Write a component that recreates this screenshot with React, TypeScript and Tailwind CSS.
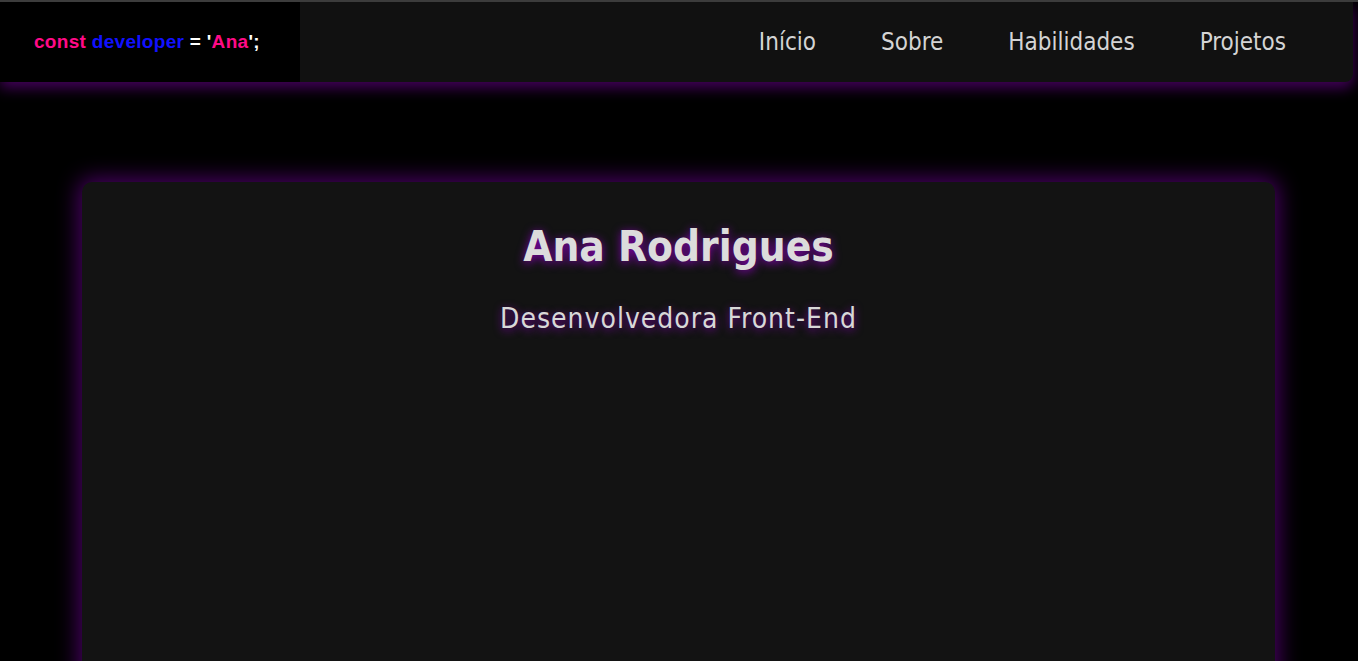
import React from 'react';

const links = ['Início', 'Sobre', 'Habilidades', 'Projetos'];

const App: React.FC = () => {
  return (
    <div className="min-h-screen bg-black border-t-2 border-[#3c3c3c] overflow-hidden">
      {/* Header */}
      <header className="flex items-stretch h-[80px] w-[1353px] bg-[#111111] rounded-br-lg shadow-[0_6px_14px_rgba(90,0,120,0.75)]">
        <div className="w-[300px] bg-black flex items-center pl-[34px]">
          <span className="font-['Liberation_Sans',sans-serif] font-bold text-[19px] tracking-[0.3px] text-white">
            <span className="text-[#ff0a87]">const </span>
            <span className="text-[#1111ff]">developer</span>
            <span> = '</span>
            <span className="text-[#ff0a87]">Ana</span>
            <span>';</span>
          </span>
        </div>
        <nav className="flex-1 flex items-center justify-end pr-[67px] gap-[65px] font-['DejaVu_Sans_Condensed','DejaVu_Sans',sans-serif] text-[24px] text-[#d4d4d4]">
          {links.map((l) => (
            <a key={l} className="cursor-pointer">
              {l}
            </a>
          ))}
        </nav>
      </header>

      {/* Hero */}
      <main className="px-[82px] pt-[100px] pr-[83px]">
        <section className="bg-[#131313] rounded-[10px] h-[600px] shadow-[0_0_22px_3px_rgba(95,0,130,0.8)] flex flex-col items-center pt-[38px]">
          <h1 className="font-['DejaVu_Sans_Condensed','DejaVu_Sans',sans-serif] font-bold text-[42px] leading-[54px] text-[#dcdcdc] [text-shadow:0_2px_10px_rgba(140,0,190,0.9)]">
            Ana Rodrigues
          </h1>
          <p className="mt-[24px] font-['DejaVu_Sans_Condensed','DejaVu_Sans',sans-serif] font-light text-[28px] tracking-[1px] text-[#d8d8d8] [text-shadow:0_2px_8px_rgba(140,0,190,0.8)]">
            Desenvolvedora Front-End
          </p>
        </section>
      </main>
    </div>
  );
};

export default App;
